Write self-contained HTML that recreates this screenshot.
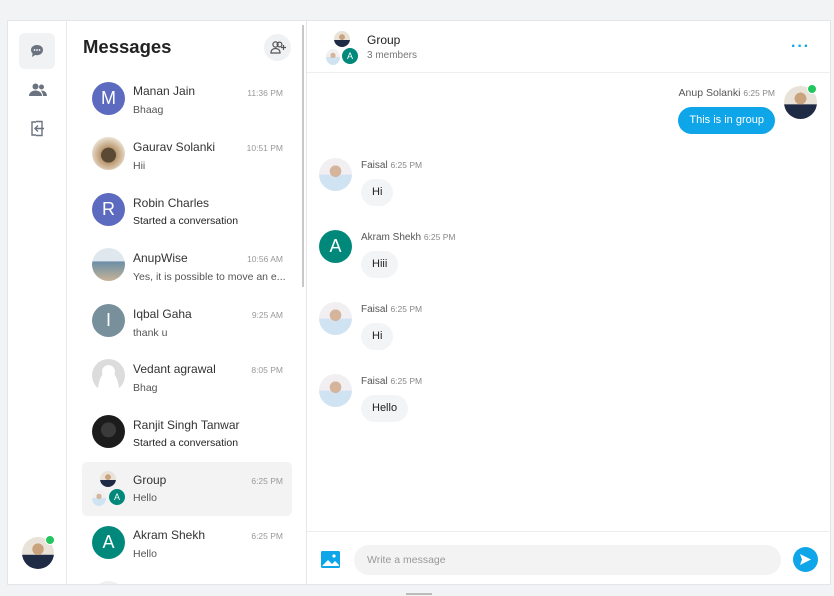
<!DOCTYPE html>
<html><head><meta charset="utf-8"><style>
*{box-sizing:border-box;margin:0;padding:0}
body{width:834px;height:596px;background:#f2f3f4;font-family:"Liberation Sans",sans-serif;position:relative;overflow:hidden;color:#222}
.card{position:absolute;left:7px;top:20px;width:824px;height:565px;background:#fff;border:1px solid #e3e5e8;overflow:hidden}
.rail{position:absolute;left:0;top:0;width:59px;height:565px;border-right:1px solid #e8e9eb}
.list{position:absolute;left:59px;top:0;width:240px;height:565px;border-right:1px solid #e6e7e9}
.abs{position:absolute}
.av{position:absolute;border-radius:50%;color:#fff;display:flex;align-items:center;justify-content:center;font-size:18px}
.name{position:absolute;font-size:12px;color:#333}
.msg{position:absolute;font-size:10.5px;color:#555}
.time{position:absolute;font-size:8.5px;color:#999;right:23px}
.photo{background:radial-gradient(circle at 50% 38%,#c9a27e 0 22%,transparent 23%),linear-gradient(#e9e2d8 55%,#1f2a45 56%)}
.face{background:radial-gradient(circle at 50% 40%,#d4b49b 0 22%,transparent 23%),linear-gradient(#f2eff2 50%,#cfe3f2 51%)}
.bub{position:absolute;border-radius:16px;font-size:11px;padding:0 11px;height:27px;line-height:27px}
</style></head><body>
<div class="card">
 <div class="rail">
  <div class="abs" style="left:11px;top:12px;width:36px;height:36px;background:#f1f2f4;border-radius:6px"></div>
  <svg class="abs" style="left:22px;top:23px" width="14" height="14" viewBox="0 0 14 14"><path d="M7 1C3.4 1 1 3.2 1 6c0 1.4.6 2.6 1.6 3.4L2 13l3.2-2c.6.2 1.2.2 1.8.2 3.6 0 6-2.3 6-5.2S10.6 1 7 1z" fill="#6b7280"/><circle cx="4.5" cy="6" r=".9" fill="#fff"/><circle cx="7" cy="6" r=".9" fill="#fff"/><circle cx="9.5" cy="6" r=".9" fill="#fff"/></svg>
  <svg class="abs" style="left:21px;top:62px" width="18" height="14" viewBox="0 0 18 14"><circle cx="6.5" cy="3.5" r="3" fill="#6b7280"/><path d="M0 13c0-3.5 3-5.5 6.5-5.5S13 9.5 13 13z" fill="#6b7280"/><circle cx="12.5" cy="4" r="2.5" fill="#6b7280"/><path d="M12 7.5c3 0 6 1.5 6 5.5h-4c0-2-1-4-2-5.5z" fill="#6b7280"/></svg>
  <svg class="abs" style="left:22px;top:99px" width="16" height="17" viewBox="0 0 16 17" fill="none" stroke="#6b7280" stroke-width="1.4"><path d="M6 2H2v13h4"/><path d="M6 1.5l6 0v14H6"/><path d="M14 8.5H5M8 5.5l-3 3 3 3"/></svg>
  <div class="av photo" style="left:14px;top:516px;width:32px;height:32px"></div>
  <div class="abs" style="left:37px;top:514px;width:10px;height:10px;border-radius:50%;background:#22c55e;border:1.5px solid #fff"></div>
 </div>
 <div class="list">
  <div class="abs" style="left:16px;top:15px;font-size:18.5px;font-weight:bold;color:#222">Messages</div>
  <div class="abs" style="left:197px;top:13px;width:27px;height:27px;border-radius:50%;background:#f0f1f3"></div>
  <svg class="abs" style="left:203px;top:20px" width="16" height="13" viewBox="0 0 16 13" fill="none" stroke="#555" stroke-width="1.2"><circle cx="5.5" cy="3.5" r="2.6"/><path d="M1 12c0-3 2-4.5 4.5-4.5S10 9 10 12z"/><circle cx="9.5" cy="3.5" r="2.4"/><path d="M13.5 4v5M11 6.5h5"/></svg>
  <div class="abs" style="left:235px;top:4px;width:2px;height:262px;background:#c8c8c8"></div>

  <div class="av" style="left:25px;top:61px;width:33px;height:33px;background:#5c6bc0">M</div>
  <div class="name" style="left:66px;top:63px">Manan Jain</div><div class="time" style="top:67px">11:36 PM</div><div class="msg" style="left:66px;top:83px">Bhaag</div>

  <div class="av" style="left:25px;top:116px;width:33px;height:33px;background:radial-gradient(circle at 50% 55%,#5a4a35 0 30%,#b8956c 31%,#e8dccb 70%)"></div>
  <div class="name" style="left:66px;top:119px">Gaurav Solanki</div><div class="time" style="top:122px">10:51 PM</div><div class="msg" style="left:66px;top:139px">Hii</div>

  <div class="av" style="left:25px;top:172px;width:33px;height:33px;background:#5c6bc0">R</div>
  <div class="name" style="left:66px;top:175px">Robin Charles</div><div class="msg" style="left:66px;top:194px;color:#222">Started a conversation</div>

  <div class="av" style="left:25px;top:227px;width:33px;height:33px;background:linear-gradient(#dfe8ee 40%,#6a8ea8 41%,#c6b396)"></div>
  <div class="name" style="left:66px;top:230px">AnupWise</div><div class="time" style="top:233px">10:56 AM</div><div class="msg" style="left:66px;top:250px">Yes, it is possible to move an e...</div>

  <div class="av" style="left:25px;top:283px;width:33px;height:33px;background:#78909c">I</div>
  <div class="name" style="left:66px;top:286px">Iqbal Gaha</div><div class="time" style="top:289px">9:25 AM</div><div class="msg" style="left:66px;top:306px">thank u</div>

  <div class="av" style="left:25px;top:338px;width:33px;height:33px;background:radial-gradient(circle at 50% 38%,#fff 0 24%,transparent 25%),radial-gradient(ellipse at 50% 100%,#fff 0 45%,#dcdcdc 46%)"></div>
  <div class="name" style="left:66px;top:341px">Vedant agrawal</div><div class="time" style="top:344px">8:05 PM</div><div class="msg" style="left:66px;top:361px">Bhag</div>

  <div class="av" style="left:25px;top:394px;width:33px;height:33px;background:radial-gradient(circle at 50% 45%,#3a3a3a 0 30%,#1c1c1c 31%)"></div>
  <div class="name" style="left:66px;top:397px">Ranjit Singh Tanwar</div><div class="msg" style="left:66px;top:416px;color:#222">Started a conversation</div>

  <div class="abs" style="left:15px;top:441px;width:210px;height:54px;background:#f3f3f4;border-radius:5px"></div>
  <div class="av photo" style="left:33px;top:450px;width:16px;height:16px"></div>
  <div class="av face" style="left:25px;top:469px;width:14px;height:16px"></div>
  <div class="av" style="left:42px;top:468px;width:16px;height:16px;background:#00897b;font-size:9px">A</div>
  <div class="name" style="left:66px;top:452px">Group</div><div class="time" style="top:455px">6:25 PM</div><div class="msg" style="left:66px;top:471px">Hello</div>

  <div class="av" style="left:25px;top:505px;width:33px;height:33px;background:#00897b">A</div>
  <div class="name" style="left:66px;top:507px">Akram Shekh</div><div class="time" style="top:510px">6:25 PM</div><div class="msg" style="left:66px;top:527px">Hello</div>

  <div class="av face" style="left:25px;top:560px;width:33px;height:33px"></div>
  <div class="name" style="left:66px;top:562px">Faisal</div>
 </div>
 <div class="abs" style="left:299px;top:0;width:525px;height:565px">
  <div class="abs" style="left:0;top:0;width:525px;height:52px;border-bottom:1px solid #eceef0"></div>
  <div class="av photo" style="left:27px;top:10px;width:16px;height:16px"></div>
  <div class="av face" style="left:19px;top:28px;width:14px;height:16px"></div>
  <div class="av" style="left:35px;top:27px;width:16px;height:16px;background:#00897b;font-size:9px">A</div>
  <div class="abs" style="left:60px;top:12px;font-size:12px;color:#222">Group</div>
  <div class="abs" style="left:60px;top:29px;font-size:10px;color:#777">3 members</div>
  <div class="abs" style="left:484px;top:17px;font-size:16px;color:#0ea5e9;letter-spacing:1px;font-weight:bold">···</div>

  <div class="abs" style="right:57px;top:66px;font-size:10.5px;color:#555;white-space:nowrap">Anup Solanki <span style="font-size:8.5px;color:#888">6:25 PM</span></div>
  <div class="av photo" style="left:477px;top:65px;width:33px;height:33px"></div>
  <div class="abs" style="left:500px;top:63px;width:10px;height:10px;border-radius:50%;background:#22c55e;border:1.5px solid #fff"></div>
  <div class="bub" style="right:57px;top:86px;background:#0ea5e9;color:#fff">This is in group</div>

  <div class="av face" style="left:12px;top:137px;width:33px;height:33px"></div>
  <div class="abs" style="left:54px;top:139px;font-size:10px;color:#555">Faisal <span style="font-size:8.5px;color:#888">6:25 PM</span></div>
  <div class="bub" style="left:54px;top:158px;background:#f3f4f5">Hi</div>

  <div class="av" style="left:12px;top:209px;width:33px;height:33px;background:#00897b">A</div>
  <div class="abs" style="left:54px;top:211px;font-size:10px;color:#555">Akram Shekh <span style="font-size:8.5px;color:#888">6:25 PM</span></div>
  <div class="bub" style="left:54px;top:230px;background:#f3f4f5">Hiii</div>

  <div class="av face" style="left:12px;top:281px;width:33px;height:33px"></div>
  <div class="abs" style="left:54px;top:283px;font-size:10px;color:#555">Faisal <span style="font-size:8.5px;color:#888">6:25 PM</span></div>
  <div class="bub" style="left:54px;top:302px;background:#f3f4f5">Hi</div>

  <div class="av face" style="left:12px;top:353px;width:33px;height:33px"></div>
  <div class="abs" style="left:54px;top:355px;font-size:10px;color:#555">Faisal <span style="font-size:8.5px;color:#888">6:25 PM</span></div>
  <div class="bub" style="left:54px;top:374px;background:#f3f4f5">Hello</div>

  <div class="abs" style="left:0;top:510px;width:525px;height:1px;background:#eceef0"></div>
  <svg class="abs" style="left:14px;top:530px" width="19" height="17" viewBox="0 0 19 17"><rect width="19" height="17" rx="1.5" fill="#0ea5e9"/><path d="M1 15l6-6 4 4 3-3 4 4v1H1z" fill="#fff"/><circle cx="13" cy="5" r="1.6" fill="#fff"/></svg>
  <div class="abs" style="left:47px;top:524px;width:427px;height:30px;border-radius:15px;background:#f3f3f4;font-size:10.5px;color:#999;padding:9px 13px">Write a message</div>
  <div class="abs" style="left:486px;top:526px;width:25px;height:25px;border-radius:50%;background:#0ea5e9"></div>
  <svg class="abs" style="left:492px;top:532px" width="13" height="13" viewBox="0 0 13 13"><path d="M1 1l11 5.5L1 12l2-5.5z" fill="#fff"/></svg>
 </div>
</div>
<div class="abs" style="left:406px;top:593px;width:26px;height:2px;background:#bbb"></div>
</body></html>
